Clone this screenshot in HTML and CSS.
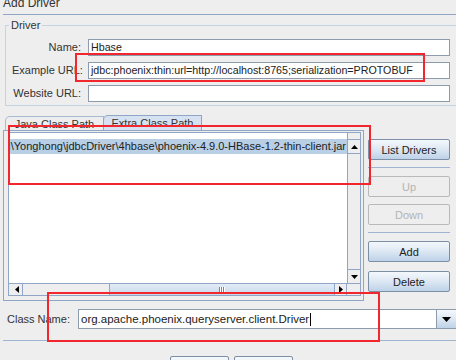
FILE: index.html
```html
<!DOCTYPE html>
<html>
<head>
<meta charset="utf-8">
<link rel="stylesheet" href="styles.css">
</head>
<body>
<div class="dialog">
  <div class="title">Add Driver</div>
  <div class="title-rule"></div>

  <div class="group">
    <span class="legend">Driver</span>
    <div class="form">
      <label class="lbl">Name:</label>
      <div class="field">Hbase</div>
      <label class="lbl">Example URL:</label>
      <div class="field">jdbc:phoenix:thin:url=http://localhost:8765;serialization=PROTOBUF</div>
      <label class="lbl">Website URL:</label>
      <div class="field"></div>
    </div>
  </div>

  <div class="middle">
    <div class="tabs">
      <div class="tabbar">
        <div class="tab">Java Class Path</div>
        <div class="tab selected">Extra Class Path</div>
      </div>
      <div class="panel">
        <div class="scrollpane">
          <div class="sp-main">
            <div class="list">
              <div class="row"><span class="row-text">H\Yonghong\jdbcDriver\4hbase\phoenix-4.9.0-HBase-1.2-thin-client.jar</span></div>
            </div>
            <div class="vscroll">
              <div class="arrow-btn"><svg width="7" height="4" viewBox="0 0 7 4"><path d="M0 4 L3.5 0 L7 4 Z" fill="#000"/></svg></div>
              <div class="vtrack"></div>
              <div class="arrow-btn"><svg width="7" height="4" viewBox="0 0 7 4"><path d="M0 0 L3.5 4 L7 0 Z" fill="#000"/></svg></div>
            </div>
          </div>
          <div class="sp-bottom">
            <div class="hscroll">
              <div class="arrow-btn h"><svg width="4" height="7" viewBox="0 0 4 7"><path d="M4 0 L0 3.5 L4 7 Z" fill="#000"/></svg></div>
              <div class="htrack">
                <div class="hthumb"><span class="grip"></span></div>
              </div>
              <div class="arrow-btn h"><svg width="4" height="7" viewBox="0 0 4 7"><path d="M0 0 L4 3.5 L0 7 Z" fill="#000"/></svg></div>
            </div>
            <div class="corner"></div>
          </div>
        </div>
      </div>
    </div>

    <div class="side">
      <button class="btn">List Drivers</button>
      <div class="sep s1"></div>
      <button class="btn disabled">Up</button>
      <button class="btn disabled">Down</button>
      <div class="sep s2"></div>
      <button class="btn">Add</button>
      <button class="btn">Delete</button>
    </div>
  </div>

  <div class="class-row">
    <label class="cls-lbl">Class Name:</label>
    <div class="combo">
      <div class="combo-field">org.apache.phoenix.queryserver.client.Driver<span class="caret"></span></div>
      <div class="combo-btn"><svg width="9" height="5" viewBox="0 0 9 5"><path d="M0 0 L9 0 L4.5 5 Z" fill="#000"/></svg></div>
    </div>
  </div>

  <div class="bottom-rule"></div>
  <div class="bottom-buttons">
    <div class="bbtn"></div>
    <div class="bbtn"></div>
  </div>

  <div class="annot a1"></div>
  <div class="annot a2"></div>
  <div class="annot a3"></div>
</div>
</body>
</html>
```

FILE: styles.css
```css
html, body {
  margin: 0;
  padding: 0;
  background: #eeeeee;
  overflow: hidden;
}
body {
  width: 456px;
  height: 360px;
}
.dialog {
  position: relative;
  width: 470px;
  font-family: "Liberation Sans", Arial, sans-serif;
  font-size: 11px;
  color: #333333;
}
.title {
  margin: -3px 0 0 3px;
  font-size: 12px;
  line-height: 12px;
  height: 12px;
}
.title-rule {
  margin: 5px 0 0 3px;
  height: 1px;
  background: #8fa6c6;
}
.group {
  margin: 10px 0 0 5px;
  border: 1px solid #c6d3e3;
  padding: 0 0 3px 0;
}
.legend {
  display: block;
  width: fit-content;
  margin: -7px 0 0 3px;
  padding: 0 2px;
  background: #eeeeee;
  line-height: 12px;
  height: 12px;
  font-size: 11px;
}
.form {
  margin-top: 8px;
  display: grid;
  grid-template-columns: 69px 362px;
  column-gap: 7px;
  row-gap: 6px;
  padding-left: 6px;
}
.lbl {
  text-align: right;
  line-height: 17px;
  white-space: nowrap;
}
.field {
  height: 15px;
  border: 1px solid #8d9bad;
  background: #ffffff;
  line-height: 15px;
  padding-left: 2px;
  white-space: nowrap;
  overflow: hidden;
  color: #222;
  font-size: 10.7px;
}

.middle {
  display: flex;
  margin-top: 9px;
  padding-left: 3px;
}
.tabs {
  width: 361px;
  display: flex;
  flex-direction: column;
}
.tabbar {
  display: flex;
  align-items: flex-end;
  padding-left: 2px;
  height: 15px;
}
.tab {
  width: 97px;
  height: 13px;
  border: 1px solid #a9bbd3;
  border-bottom: none;
  border-top-left-radius: 5px;
  line-height: 14px;
  text-align: center;
  background: #eeeeee;
  box-sizing: content-box;
}
.tab.selected {
  height: 14px;
  line-height: 15px;
  background: #d6e2f1;
  border-color: #8fa6c6;
  margin-left: -1px;
  width: 97px;
}
.panel {
  border: 1px solid #8fa6c6;
  background: #eeeeee;
  padding: 1px 2px 4px 4px;
  box-sizing: border-box;
  height: 171px;
}
.scrollpane {
  border: 1px solid #8fa6c6;
  height: 100%;
  box-sizing: border-box;
  display: flex;
  flex-direction: column;
  background: #ffffff;
}
.sp-main {
  flex: 1;
  display: flex;
  min-height: 0;
}
.list {
  flex: 1;
  background: #ffffff;
  padding-top: 6px;
  overflow: hidden;
  min-width: 0;
}
.row {
  height: 15px;
  background: #b8cfe5;
  line-height: 15px;
  white-space: nowrap;
  overflow: hidden;
  display: flex;
  justify-content: flex-end;
}
.row-text {
  flex-shrink: 0;
  padding-right: 1px;
  color: #222;
}
.vscroll {
  width: 12px;
  border-left: 1px solid #8fa6c6;
  background: #eeeeee;
  display: flex;
  flex-direction: column;
  padding-top: 6px;
}
.arrow-btn {
  height: 13px;
  display: flex;
  align-items: center;
  justify-content: center;
  background: #eeeeee;
  border-top: 1px solid #ffffff;
  border-bottom: 1px solid #8fa6c6;
}
.vscroll .arrow-btn:first-child {
  border-top: 1px solid #8fa6c6;
}
.vtrack {
  flex: 1;
  background: #eeeeee;
}
.vscroll .arrow-btn:last-child {
  border-top: 1px solid #8fa6c6;
  border-bottom: none;
}
.sp-bottom {
  display: flex;
  height: 11px;
  border-top: 1px solid #8fa6c6;
}
.hscroll {
  flex: 1;
  display: flex;
  background: #eeeeee;
  padding-left: 2px;
}
.arrow-btn.h {
  width: 11px;
  height: auto;
  border: none;
  border-right: 1px solid #8fa6c6;
}
.hscroll .arrow-btn.h:last-child {
  border-right: none;
  border-left: 1px solid #8fa6c6;
}
.htrack {
  flex: 1;
  display: flex;
  justify-content: flex-end;
}
.hthumb {
  width: 224px;
  background: linear-gradient(#e3ecf6, #c6d8eb);
  border-left: 1px solid #8fa6c6;
  display: flex;
  align-items: center;
  justify-content: center;
}
.grip {
  width: 6px;
  height: 6px;
  background: repeating-linear-gradient(to right, #6c86a8 0 1px, #ffffff 1px 2px);
}
.corner {
  width: 13px;
  background: #eeeeee;
  border-left: 1px solid #8fa6c6;
}

.side {
  width: 82px;
  margin-left: 4px;
  padding-top: 24px;
  display: flex;
  flex-direction: column;
}
.btn {
  height: 21px;
  border: 1px solid #7d8fa4;
  border-radius: 2px;
  background: linear-gradient(to bottom, #f4f8fc 0%, #dfe9f4 45%, #bed2e8 100%);
  font-family: "Liberation Sans", Arial, sans-serif;
  font-size: 11px;
  color: #222;
  padding: 0;
  margin: 0;
}
.btn.disabled {
  background: #eeeeee;
  border-color: #b9b9b9;
  color: #b4b4b4;
}
.btn + .btn {
  margin-top: 7px;
}
.sep {
  height: 1px;
  background: #9fb4d1;
  margin: 7px 0 8px 0;
}
.btn:last-child {
  margin-top: 9px;
}

.class-row {
  display: flex;
  align-items: center;
  margin-top: 8px;
  padding-left: 7px;
  padding-right: 13px;
}
.cls-lbl {
  width: 71px;
  white-space: nowrap;
}
.combo {
  display: flex;
  height: 20px;
  flex: 1;
}
.combo-field {
  flex: 1;
  border: 1px solid #8d9bad;
  background: #ffffff;
  line-height: 18px;
  padding-left: 2px;
  white-space: nowrap;
  font-size: 11.5px;
  color: #222;
}
.caret {
  display: inline-block;
  width: 1px;
  height: 13px;
  background: #000;
  vertical-align: middle;
  margin-left: 1px;
}
.combo-btn {
  width: 19px;
  border: 1px solid #8d9bad;
  border-left: none;
  background: linear-gradient(to bottom, #f4f8fc 0%, #dfe9f4 45%, #bed2e8 100%);
  display: flex;
  align-items: center;
  justify-content: center;
}
.bottom-rule {
  margin: 11px 0 0 3px;
  height: 1px;
  background: #9fb4d1;
}
.bottom-buttons {
  display: flex;
  gap: 5px;
  padding-left: 170px;
  margin-top: 15px;
}
.bbtn {
  width: 57px;
  height: 20px;
  border: 1px solid #7d8fa4;
  border-radius: 2px;
  background: linear-gradient(#f4f8fc, #dfe9f4);
}

.annot {
  position: absolute;
  border: 2px solid #f2262d;
  box-sizing: border-box;
}
.a1 { left: 75px; top: 56px; width: 350px; height: 29px; }
.a2 { left: 8px; top: 128px; width: 363px; height: 60px; }
.a3 { left: 47px; top: 295px; width: 333px; height: 50px; }
```
